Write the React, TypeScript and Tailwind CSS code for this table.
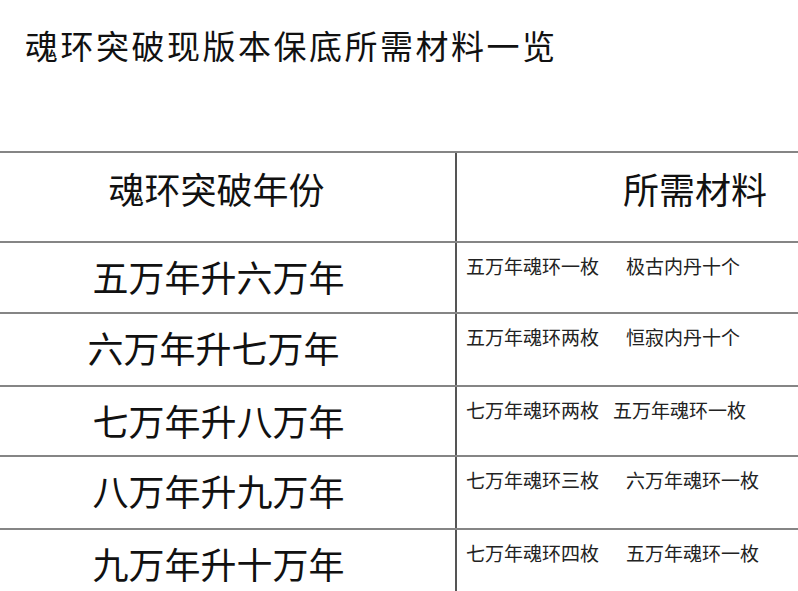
import React from "react";

const rows: { left: string; a: string; b: string; gap: string; pr: string }[] = [
  { left: "五万年升六万年", a: "五万年魂环一枚", b: "极古内丹十个", gap: "ml-[27px]", pr: "pr-[18px]" },
  { left: "六万年升七万年", a: "五万年魂环两枚", b: "恒寂内丹十个", gap: "ml-[27px]", pr: "pr-[28px]" },
  { left: "七万年升八万年", a: "七万年魂环两枚", b: "五万年魂环一枚", gap: "ml-[14px]", pr: "pr-[18px]" },
  { left: "八万年升九万年", a: "七万年魂环三枚", b: "六万年魂环一枚", gap: "ml-[27px]", pr: "pr-[18px]" },
  { left: "九万年升十万年", a: "七万年魂环四枚", b: "五万年魂环一枚", gap: "ml-[27px]", pr: "pr-[18px]" },
];

const heights = ["h-[71px]", "h-[73px]", "h-[70px]", "h-[73px]", "h-[80px]"];

export default function App() {
  return (
    <div
      className="w-[798px] h-[591px] overflow-hidden bg-white text-[#111]"
      style={{ fontFamily: '"Noto Sans CJK SC", "Noto Sans", sans-serif' }}
    >
      <div className="h-[151px] pt-[29px] pl-[25px]">
        <div className="text-[33px] leading-[33px] tracking-[2.5px]">魂环突破现版本保底所需材料一览</div>
      </div>
      <div className="border-t-2 border-[#858585]">
        <div className="grid grid-cols-[457px_1fr] h-[90px] border-b-2 border-[#858585]">
          <div className="border-r-2 border-[#555] pr-[22px] pt-[17px] text-center text-[36px] leading-[36px]">
            魂环突破年份
          </div>
          <div className="pl-[166px] pt-[17px] text-[36px] leading-[36px]">所需材料</div>
        </div>
        {rows.map((r, i) => (
          <div
            key={i}
            className={`grid grid-cols-[457px_1fr] ${heights[i]} ${i < rows.length - 1 ? "border-b-2 border-[#858585]" : ""}`}
          >
            <div className={`border-r-2 border-[#555] ${r.pr} pt-[15px] text-center text-[36px] leading-[36px]`}>
              {r.left}
            </div>
            <div className="pl-[9px] pt-[13px] text-[19px] leading-[19px] text-[#222] whitespace-nowrap">
              <span>{r.a}</span>
              <span className={r.gap}>{r.b}</span>
            </div>
          </div>
        ))}
      </div>
    </div>
  );
}
